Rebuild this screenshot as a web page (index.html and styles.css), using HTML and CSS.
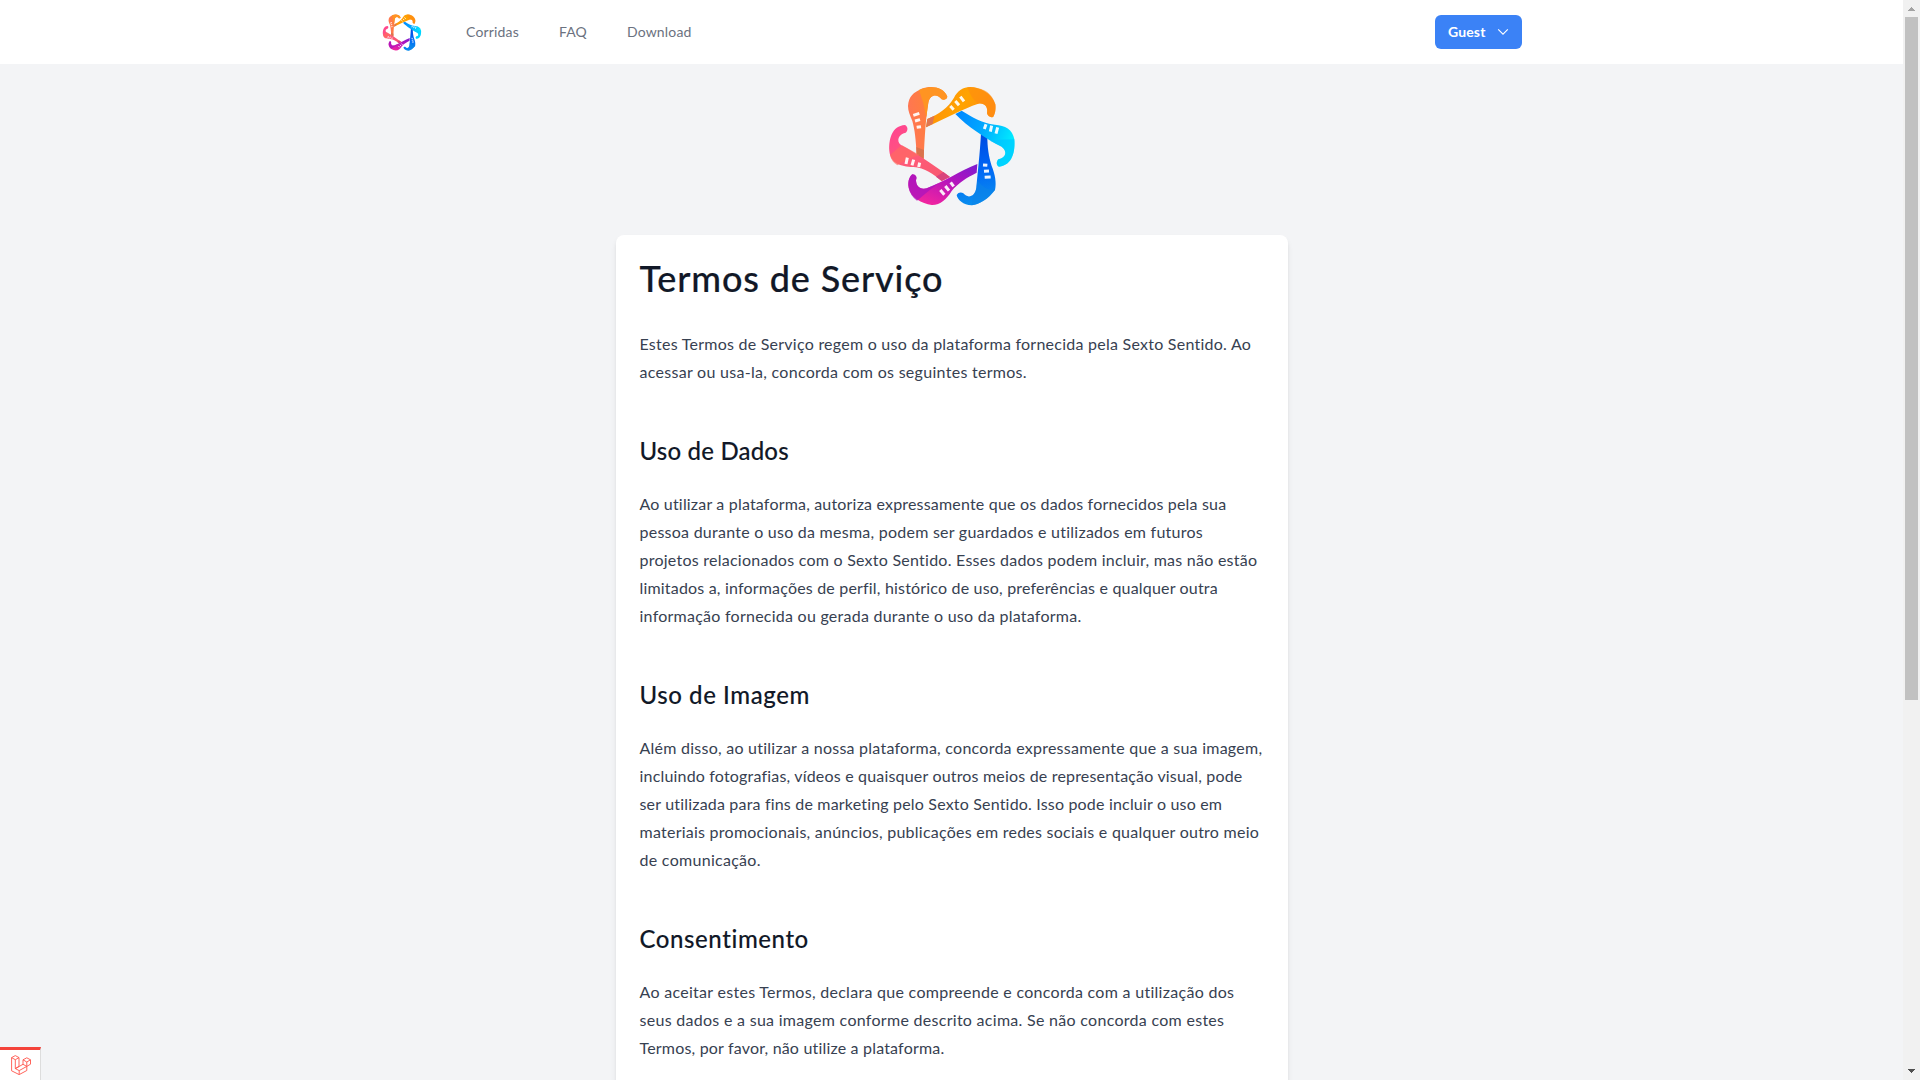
FILE: index.html
```
<!DOCTYPE html>
<html lang="pt">
<head>
<meta charset="utf-8">
<title>Termos de Serviço</title>
<link rel="stylesheet" href="styles.css">
</head>
<body>
<svg width="0" height="0" class="defs" aria-hidden="true">
  <defs>
    <linearGradient id="g-coral" x1="0" y1="0.5" x2="1" y2="0.2"><stop offset="0" stop-color="#ff7555"/><stop offset="0.5" stop-color="#ff7f3d"/><stop offset="1" stop-color="#ff9320"/></linearGradient>
    <linearGradient id="g-orange" x1="0" y1="0" x2="1" y2="0.3"><stop offset="0" stop-color="#ff8a0c"/><stop offset="0.6" stop-color="#ffa300"/><stop offset="1" stop-color="#ff8f12"/></linearGradient>
    <linearGradient id="g-cyan" x1="0" y1="0" x2="1" y2="0.4"><stop offset="0" stop-color="#0084ff"/><stop offset="0.5" stop-color="#00a8ff"/><stop offset="1" stop-color="#00eaff"/></linearGradient>
    <linearGradient id="g-blue" x1="0.5" y1="0" x2="0.6" y2="1"><stop offset="0" stop-color="#0048e0"/><stop offset="0.5" stop-color="#0066f5"/><stop offset="1" stop-color="#0a90ee"/></linearGradient>
    <linearGradient id="g-purple" x1="1" y1="0" x2="0.3" y2="1"><stop offset="0" stop-color="#7a1cd0"/><stop offset="0.45" stop-color="#b414bd"/><stop offset="1" stop-color="#f2259f"/></linearGradient>
    <linearGradient id="g-pink" x1="0.1" y1="0" x2="0.8" y2="1"><stop offset="0" stop-color="#ff4391"/><stop offset="0.5" stop-color="#ff5a78"/><stop offset="1" stop-color="#f8586f"/></linearGradient>
    <symbol id="logo" viewBox="0 0 432 420">
      <path fill="url(#g-orange)" d="M138 154L142 129C175 115 205 95 222 65C232 45 250 33 270 33C300 34 335 50 346 85C348 100 345 115 340 122C332 127 323 120 321 112C325 90 312 80 295 83C250 98 190 130 138 154Z"/>
      <path fill="#ff8c10" d="M281 34C312 38 337 52 346 85C348 100 345 115 340 122C332 127 323 120 321 112C325 90 312 80 295 83Q272 66 262 33Z" opacity=".6"/>
      <path fill="#df7650" d="M138 154L142 129L163 119L158 144Z"/>
      <path fill="url(#g-coral)" d="M84 90C86 60 100 50 125 38C150 28 190 30 202 62C200 72 190 72 185 70C172 52 150 55 145 80C138 120 134 180 131 249L110 241C108 190 104 160 97 135C90 118 84 105 84 90Z"/>
      <path fill="#ff9422" d="M117 42C150 28 190 30 202 62C200 72 190 72 185 70C172 52 150 55 145 80L139 124Q132 80 117 42Z"/>
      <path fill="#d9734d" d="M109 213L132 222L131 249L110 241Z"/>
      <path fill="url(#g-pink)" d="M210 303L185 315C160 295 135 275 100 273C60 272 32 262 28 225C26 190 35 150 75 147C85 152 84 165 77 170C55 175 48 195 63 207C110 232 165 270 210 303Z"/>
      <path fill="#ff6b60" d="M30 237Q52 218 66 208L119 237Q80 248 52 268Q34 257 30 237Z" opacity=".65"/>
      <path fill="#d9447c" d="M210 303L185 315L168 302L190 288Z"/>
      <path fill="url(#g-purple)" d="M292 264L290 290C260 305 235 320 215 345C200 370 180 388 155 387C125 382 92 365 86 335C82 315 90 300 97 295C108 295 112 305 108 312C108 330 120 342 140 337C190 318 240 285 292 264Z"/>
      <path fill="#a914bd" d="M86 335C82 315 90 300 97 295C108 295 112 305 108 312C108 330 120 342 140 337L175 322Q145 345 111 374Q90 358 86 335Z" opacity=".75"/>
      <path fill="url(#g-blue)" d="M303 172L322 180C322 215 326 240 335 270C345 295 350 320 345 342C325 368 300 385 275 388C250 388 232 370 230 357C235 347 245 348 250 352C265 370 285 360 289 335C293 290 300 230 303 172Z"/>
      <path fill="#0b83e8" d="M292 314Q320 345 345 342C325 368 300 385 275 388L282 354Q288 348 289 335Z" opacity=".6"/>
      <path fill="url(#g-cyan)" d="M226 114L245 104C275 122 305 142 345 146C375 148 398 160 403 190C406 225 398 268 357 272C347 268 350 255 355 250C380 245 382 225 365 212C320 190 260 150 226 114Z"/>
      <path fill="#00c0ff" d="M403 190C406 225 398 268 357 272C347 268 350 255 355 250C380 245 382 225 365 212L330 194Q372 190 403 190Z" opacity=".55"/>
      <g stroke="#fff" stroke-opacity=".92" stroke-width="9">
        <path d="M100 118L118 112M105 135L120 131M110 154L123 152"/>
        <path d="M241 62L252 76M226 75L237 88M211 90L221 101"/>
        <path d="M318 145L313 159M335 149L331 167M353 154L348 173"/>
        <path d="M309 267L322 268M312 286L327 285M314 304L332 303"/>
        <path d="M181 342L193 356M196 330L207 344M212 319L221 331"/>
        <path d="M82 245L78 264M101 251L96 268M119 260L116 273"/>
      </g>
    </symbol>
  </defs>
</svg>
<div class="page">
  <header class="navbar">
    <div class="navbar-inner">
      <a class="brand"><svg class="brand-logo"><use href="#logo"/></svg></a>
      <nav class="links"><a>Corridas</a><a>FAQ</a><a>Download</a></nav>
      <button class="user-menu">Guest
        <svg class="chevron" viewBox="0 0 12 8"><path d="M1.2 1.4L6 6.2L10.8 1.4"/></svg>
      </button>
    </div>
  </header>
  <main class="content">
    <svg class="hero-logo"><use href="#logo"/></svg>
    <article class="card">
      <h1>Termos de Serviço</h1>
      <p>Estes Termos de Serviço regem o uso da plataforma fornecida pela Sexto Sentido. Ao<br><span class="loose">acessar ou usa-la, concorda com os seguintes termos.</span></p>
      <h2>Uso de Dados</h2>
      <p><span class="tight">Ao utilizar a plataforma, autoriza expressamente que os dados fornecidos pela sua</span><br>pessoa durante o uso da mesma, podem ser guardados e utilizados em futuros<br>projetos relacionados com o Sexto Sentido. Esses dados podem incluir, mas não estão<br><span class="tight">limitados a, informações de perfil, histórico de uso, preferências e qualquer outra</span><br>informação fornecida ou gerada durante o uso da plataforma.</p>
      <h2 class="wide">Uso de Imagem</h2>
      <p>Além disso, ao utilizar a nossa plataforma, concorda expressamente que a sua imagem,<br><span class="tight">incluindo fotografias, vídeos e quaisquer outros meios de representação visual, pode</span><br><span class="tight">ser utilizada para fins de marketing pelo Sexto Sentido. Isso pode incluir o uso em</span><br>materiais promocionais, anúncios, publicações em redes sociais e qualquer outro meio<br><span class="loose">de comunicação.</span></p>
      <h2 class="wide">Consentimento</h2>
      <p><span class="loose">Ao aceitar estes Termos, declara que compreende e concorda com a utilização dos</span><br><span class="loose">seus dados e a sua imagem conforme descrito acima. Se não concorda com estes</span><br><span class="tight">Termos, por favor, não utilize a plataforma.</span></p>
    </article>
  </main>
</div>
<div class="scrollbar">
  <svg class="arrow" viewBox="0 0 17 17"><path fill="#a3a3a3" d="M5 11V10H6V9H7V8H8V7H9V8H10V9H11V10H12V11Z"/></svg>
  <div class="thumb"></div>
  <svg class="arrow" viewBox="0 0 17 17"><path fill="#505050" d="M5 6H12V7H11V8H10V9H9V10H8V9H7V8H6V7H5Z"/></svg>
</div>
<div class="debugbar">
  <svg viewBox="0 0 20 20"><path d="M.6 2.6L4.3.6L8 2.6L4.3 4.7ZM.6 2.6V15.8L8.2 19.6L15.8 15.5V11.4M4.3 4.7V13.6L8.2 15.6V19.6M8 2.6V11.4L4.3 13.6M8.2 15.6L15.8 11.4L12 9.3L4.5 13.5M12 4.8L15.8 2.8L19.5 4.8L15.8 7ZM12 4.8V9.3M15.8 7V11.4L19.5 9.2V4.8"/></svg>
</div>
</body>
</html>
```
FILE: styles.css
```
* { box-sizing: border-box; }
body {
  margin: 0;
  height: 1080px;
  overflow: hidden;
  display: flex;
  background: #f3f4f6;
  font-family: Lato, "Open Sans", sans-serif;
  letter-spacing: 0.0155em;
}
.defs { position: absolute; }
.page { flex: 1; height: 1080px; overflow: hidden; }

.navbar { height: 64px; background: #fff; }
.navbar-inner {
  width: 1143px;
  height: 64px;
  margin: 0 auto;
  padding-right: 1px;
  display: flex;
  align-items: center;
}
.brand, .brand-logo { display: block; width: 44px; height: 43px; }
.links {
  display: flex;
  margin-left: 42px;
  flex: 1;
  gap: 40px;
  font-size: 14px;
  line-height: 20px;
  letter-spacing: 0.012em;
  color: #6b7280;
}
.user-menu {
  display: flex;
  align-items: center;
  justify-content: space-between;
  width: 87px;
  height: 34px;
  padding: 0 13px;
  border: 0;
  border-radius: 6px;
  background: #3b82f6;
  color: #fff;
  font: 700 14px/16px Lato, sans-serif;
  letter-spacing: 0.01em;
}
.chevron { width: 12px; height: 8px; fill: none; stroke: #fff; stroke-width: 1.1; }

.content { display: flex; flex-direction: column; align-items: center; padding-top: 12px; }
.hero-logo { width: 144px; height: 140px; flex: none; }
.card {
  width: 672px;
  margin-top: 19px;
  padding: 23px 24px 24px;
  height: 900px;
  flex: none;
  background: #fff;
  border-radius: 8px;
  box-shadow: 0 4px 6px -1px rgba(0, 0, 0, .1), 0 2px 4px -2px rgba(0, 0, 0, .1);
  white-space: nowrap;
}
h1, h2 { font-weight: 500; color: #111827; }
h1 {
  margin: 0 0 32px;
  font-size: 36px;
  line-height: 40px;
  letter-spacing: 0.024em;
  -webkit-text-stroke: .2px #111827;
}
h2 {
  margin: 49px 0 23px;
  font-size: 24px;
  line-height: 32px;
  letter-spacing: 0.008em;
  -webkit-text-stroke: .1px #111827;
}
h2.wide { letter-spacing: 0.024em; }
p { margin: 0; font-size: 16px; line-height: 28px; color: #374151; }
.tight { letter-spacing: 0.0115em; }
.loose { letter-spacing: 0.018em; }

.scrollbar {
  width: 17px;
  height: 1080px;
  display: flex;
  flex-direction: column;
  align-items: center;
  background: #f1f1f1;
}
.arrow { width: 17px; height: 17px; flex: none; }
.thumb { width: 13px; height: 683px; margin-bottom: auto; background: #c1c1c1; }

.debugbar {
  position: absolute;
  left: 0;
  bottom: 0;
  width: 41px;
  height: 33px;
  padding: 5px 0 0 11px;
  border-top: 3px solid #f4433a;
  border-right: 1px solid #ddd;
  background: #fff;
}
.debugbar svg { display: block; width: 20px; height: 20px; fill: none; stroke: #ff5449; stroke-width: .9; stroke-linejoin: round; }
```
